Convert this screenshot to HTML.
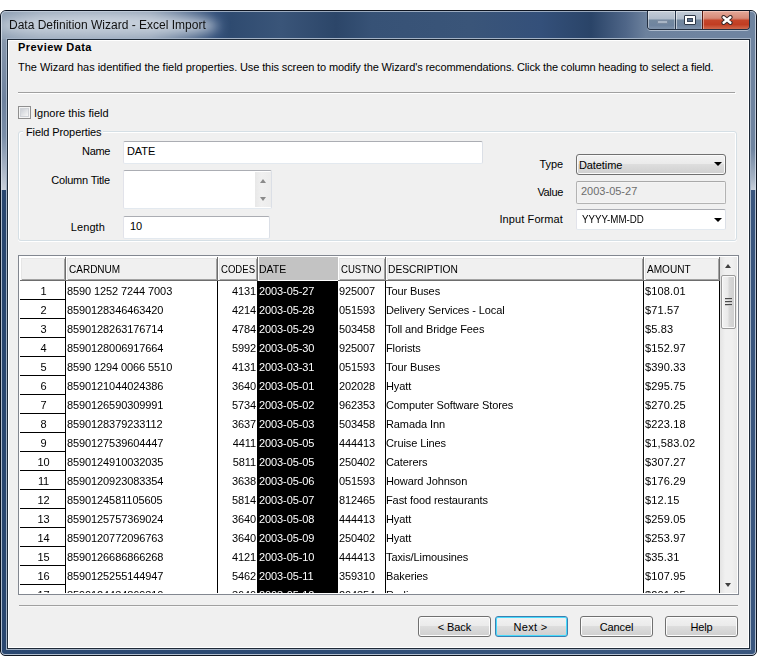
<!DOCTYPE html>
<html><head><meta charset="utf-8">
<style>
*{box-sizing:border-box;margin:0;padding:0}
html,body{width:757px;height:656px;overflow:hidden;background:#fff;font-family:"Liberation Sans",sans-serif;font-size:11px;color:#000}
.a{position:absolute}
.t{position:absolute;white-space:pre;line-height:13px;height:13px;letter-spacing:-0.1px}
.c{text-align:center}
.r{text-align:right}
#win{left:0;top:10px;width:757px;height:646px;border:1px solid #0d1420;border-radius:6px 6px 5px 5px;background:linear-gradient(90deg,#2a4770,#2c4a73 40%,#36547c 70%,#3a567e);overflow:hidden}
#frameTop{left:0;top:0;width:755px;height:179px;background:linear-gradient(#a9b5c4,#8797ac 30px,#6e829e 90px,#7a8ea8 125px,#a5b2c4 155px,#c6ced9 178px)}
#title{left:0;top:0;width:755px;height:28px;background:linear-gradient(90deg,#8fa0b4 0,#9aa9bb 40px,#8d9db2 150px,#33507a 215px,#2f4b70 230px,#3a5579 280px,#2c4669 335px,#375276 370px,#3a5579 470px,#34507a 540px,#2a4468 590px,#4f6688 625px,#6c819d 645px,#6f84a0 700px)}
#glow{left:-6px;top:3px;width:224px;height:24px;border-radius:50%;background:linear-gradient(rgba(222,228,236,.92),rgba(180,192,206,.9));filter:blur(6px)}
#inner{left:0;top:0;width:755px;height:644px;border:1px solid rgba(220,228,238,.75);border-top-color:rgba(200,210,222,.7);border-radius:5px 5px 4px 4px}
#client{left:5px;top:27px;width:745px;height:612px;border:1px solid #a4b3c6}
#client2{left:6px;top:28px;width:743px;height:610px;border:1px solid #1e2a38;background:#f0f0f0}
#client3{left:7px;top:29px;width:741px;height:608px;border:1px solid #fff;background:#f0f0f0}
.tb{position:absolute;background:#fff;border:1px solid #abadb3;border-left-color:#e2e3ea;border-right-color:#dbdfe6;border-bottom-color:#e3e9ef;border-radius:2px}
.tbx{position:absolute;border:1px solid #ccd3da;border-radius:2px}
.btn{position:absolute;width:73px;height:21px;border:1px solid #707070;border-radius:3px;background:linear-gradient(#f2f2f2 0,#ebebeb 45%,#dddddd 50%,#cfcfcf 100%);box-shadow:inset 0 0 0 1px #fcfcfc}
.hd{position:absolute;top:257px;height:24px;background:#f0f0f0;border-right:1px solid #6d6d6d;border-bottom:1px solid #6d6d6d;box-shadow:inset 1px 1px 0 #fff,inset 2px 2px 0 #e6e6e6,inset -1px -1px 0 #a3a3a3}
.vl{position:absolute;top:281px;width:1px;height:312px;background:#000}
</style></head><body>
<div id="win" class="a">
  <div id="frameTop" class="a"></div>
  <div id="title" class="a"></div>
  <div id="glow" class="a"></div>
  <div class="a" style="left:740px;top:28px;width:15px;height:151px;background:linear-gradient(#6f84a0,#6f84a0 110px,#a8b5c6 140px,#c6ced9 150px)"></div>
  <div id="inner" class="a"></div>
  <div class="t" style="left:8px;top:7px;font-size:12px;line-height:14px;height:14px;letter-spacing:0;color:#111;will-change:transform">Data Definition Wizard - Excel Import</div>
  <div id="client" class="a"></div>
  <div id="client2" class="a"></div>
  <div id="client3" class="a"></div>
</div>

<!-- title buttons -->
<div class="a" style="left:647px;top:11px;width:103px;height:19px;border:1px solid #222e40;border-top:none;border-radius:0 0 4px 4px;overflow:hidden;box-shadow:0 1px 0 rgba(230,236,244,.55)">
  <div class="a" style="left:0;top:0;width:28px;height:18px;background:linear-gradient(#c3ccd7,#b0bccb 42%,#73889f 52%,#6f849f 80%,#8194ac 100%);border-right:1px solid #28374c;box-shadow:inset 1px 1px 0 rgba(255,255,255,.45),inset -1px 0 0 rgba(255,255,255,.35)"></div>
  <div class="a" style="left:9px;top:9px;width:11px;height:4px;background:#a9b5c5;border:1px solid #7a8aa0"></div>
  <div class="a" style="left:28px;top:0;width:27px;height:18px;background:linear-gradient(#c3ccd7,#b0bccb 42%,#73889f 52%,#6f849f 80%,#8194ac 100%);border-right:1px solid #5a1a10;box-shadow:inset 1px 1px 0 rgba(255,255,255,.55),inset -1px 0 0 rgba(255,255,255,.35)"></div>
  <div class="a" style="left:36px;top:4px;width:12px;height:10px;border:1px solid #2e3848;background:#fff;border-radius:1px"></div>
  <div class="a" style="left:39px;top:7px;width:6px;height:4px;background:#5d718d;border:1px solid #3a4658"></div>
  <div class="a" style="left:55px;top:0;width:48px;height:18px;background:linear-gradient(#e4a999,#d68a78 40%,#c5452a 52%,#c13d22 75%,#cf6a4e 100%);box-shadow:inset 1px 1px 0 rgba(255,220,210,.5)"></div>
  <svg class="a" style="left:73px;top:4px" width="12" height="10" viewBox="0 0 12 10"><path d="M2.6 2.2 L9.4 7.8 M9.4 2.2 L2.6 7.8" stroke="#3a2a2a" stroke-width="4.4" stroke-linecap="round"/><path d="M2.6 2.2 L9.4 7.8 M9.4 2.2 L2.6 7.8" stroke="#fff" stroke-width="2.4" stroke-linecap="round"/></svg>
</div>

<!-- heading -->
<div class="t" style="left:18px;top:41px;font-weight:bold;letter-spacing:0.45px">Preview Data</div>
<div class="t" style="left:18px;top:61px;letter-spacing:-0.03px">The Wizard has identified the field properties.</div>
<div class="t" style="left:240px;top:61px;letter-spacing:-0.11px">Use this screen to modify the Wizard's recommendations.</div>
<div class="t" style="left:517px;top:61px;letter-spacing:-0.14px">Click the column heading to select a field.</div>
<div class="a" style="left:18px;top:92px;width:717px;height:1px;background:#a0a0a0"></div>
<div class="a" style="left:18px;top:93px;width:718px;height:1px;background:#fff"></div>

<!-- checkbox -->
<div class="a" style="left:18px;top:106px;width:13px;height:13px;border:1px solid #8f8f8f;background:#f4f4f4"></div>
<div class="a" style="left:20px;top:108px;width:9px;height:9px;border:1px solid #d0d3d8;background:linear-gradient(135deg,#cbcfd5,#f6f6f6)"></div>
<div class="t" style="left:34px;top:107px;letter-spacing:0">Ignore this field</div>

<!-- group -->
<div class="a" style="left:18px;top:131px;width:719px;height:110px;border:1px solid #d5dfe5;border-radius:3px;box-shadow:inset 1px 1px 0 #fff,inset -1px 0 0 #fff,0 1px 0 #fff"></div>
<div class="a" style="left:23px;top:125px;width:80px;height:12px;background:#f0f0f0"></div>
<div class="t" style="left:26px;top:126px;letter-spacing:-0.1px">Field Properties</div>

<div class="t r" style="left:60px;width:50px;top:145px;letter-spacing:-0.35px">Name</div>
<div class="tb" style="left:123px;top:141px;width:360px;height:23px"></div>
<div class="t" style="left:127px;top:145px">DATE</div>

<div class="t r" style="left:40px;width:70px;top:174px;letter-spacing:-0.2px">Column Title</div>
<div class="tb" style="left:123px;top:170px;width:149px;height:39px"></div>
<div class="a" style="left:255px;top:172px;width:16px;height:35px;background:linear-gradient(90deg,#e8e8e8,#f0f0f0 40%,#ececec)"></div>
<div class="a" style="left:260px;top:179px;width:0;height:0;border-left:3.5px solid transparent;border-right:3.5px solid transparent;border-bottom:4px solid #8a8a8a"></div>
<div class="a" style="left:260px;top:197px;width:0;height:0;border-left:3.5px solid transparent;border-right:3.5px solid transparent;border-top:4px solid #8a8a8a"></div>

<div class="t r" style="left:40px;width:65px;top:221px;letter-spacing:0.1px">Length</div>
<div class="tb" style="left:123px;top:216px;width:147px;height:23px"></div>
<div class="t" style="left:130px;top:220px">10</div>

<div class="t r" style="left:500px;width:63px;top:158px">Type</div>
<div class="a" style="left:576px;top:154px;width:150px;height:21px;border:1px solid #707070;border-radius:3px;background:linear-gradient(#f2f2f2 0,#ebebeb 45%,#dddddd 50%,#cfcfcf 100%);box-shadow:inset 0 0 0 1px #fafafa"></div>
<div class="t" style="left:579px;top:159px">Datetime</div>
<div class="a" style="left:714px;top:162px;width:0;height:0;border-left:4px solid transparent;border-right:4px solid transparent;border-top:4px solid #000"></div>

<div class="t r" style="left:500px;width:63px;top:186px;letter-spacing:-0.35px">Value</div>
<div class="a" style="left:576px;top:181px;width:150px;height:23px;border:1px solid #b3b3b3;border-top-color:#a9a9a9;border-radius:2px;background:#f0f0f0;box-shadow:inset 0 0 0 1px #f4f4f4"></div>
<div class="t" style="left:581px;top:185px;color:#6d6d6d;letter-spacing:0">2003-05-27</div>

<div class="t r" style="left:480px;width:83px;top:213px;letter-spacing:0.1px">Input Format</div>
<div class="tb" style="left:576px;top:209px;width:150px;height:21px"></div>
<div class="t" style="left:582px;top:213px;letter-spacing:0;transform:scaleX(0.885);transform-origin:0 0">YYYY-MM-DD</div>
<div class="a" style="left:714px;top:218px;width:0;height:0;border-left:4px solid transparent;border-right:4px solid transparent;border-top:4px solid #000"></div>

<!-- grid -->
<div class="a" style="left:18px;top:255px;width:721px;height:340px;border:1px solid #828790;background:#fff"></div>
<div class="hd" style="left:20px;width:46px"></div>
<div class="hd" style="left:66px;width:152px"></div>
<div class="hd" style="left:218px;width:40px"></div>
<div class="a" style="left:258px;top:257px;width:80px;height:24px;background:#c3c3c3;border-left:1px solid #fff;border-bottom:1px solid #fff"></div>
<div class="hd" style="left:338px;width:48px"></div>
<div class="hd" style="left:386px;width:258px"></div>
<div class="hd" style="left:644px;width:76px"></div>
<div class="t" style="left:69px;top:263px;letter-spacing:0;transform:scaleX(0.91);transform-origin:0 0">CARDNUM</div>
<div class="t" style="left:221px;top:263px;letter-spacing:0;transform:scaleX(0.87);transform-origin:0 0">CODES</div>
<div class="t" style="left:259px;top:263px;letter-spacing:0;transform:scaleX(0.955);transform-origin:0 0">DATE</div>
<div class="t" style="left:341px;top:263px;letter-spacing:0;transform:scaleX(0.87);transform-origin:0 0">CUSTNO</div>
<div class="t" style="left:388px;top:263px;letter-spacing:0;transform:scaleX(0.93);transform-origin:0 0">DESCRIPTION</div>
<div class="t" style="left:647px;top:263px;letter-spacing:0;transform:scaleX(0.915);transform-origin:0 0">AMOUNT</div>
<div class="a" style="left:257px;top:281px;width:81px;height:312px;background:#000"></div>
<div class="vl" style="left:65px"></div>
<div class="vl" style="left:217px"></div>
<div class="vl" style="left:385px"></div>
<div class="vl" style="left:643px"></div>
<div class="vl" style="left:719px"></div>
<div class="a" style="left:0;top:0;width:757px;height:593px;overflow:hidden">
<div class="t c" style="left:21px;top:285px;width:45px">1</div>
<div class="a" style="left:20px;top:299px;width:45px;height:1px;background:#000"></div>
<div class="t" style="left:67px;top:285px">8590 1252 7244 7003</div>
<div class="t r" style="left:219px;width:37px;top:285px">4131</div>
<div class="t" style="left:259px;top:285px;color:#fff">2003-05-27</div>
<div class="t" style="left:339px;top:285px">925007</div>
<div class="t" style="left:386px;top:285px">Tour Buses</div>
<div class="t" style="left:645px;top:285px;letter-spacing:0.15px">$108.01</div>
<div class="t c" style="left:21px;top:304px;width:45px">2</div>
<div class="a" style="left:20px;top:318px;width:45px;height:1px;background:#000"></div>
<div class="t" style="left:67px;top:304px">8590128346463420</div>
<div class="t r" style="left:219px;width:37px;top:304px">4214</div>
<div class="t" style="left:259px;top:304px;color:#fff">2003-05-28</div>
<div class="t" style="left:339px;top:304px">051593</div>
<div class="t" style="left:386px;top:304px">Delivery Services - Local</div>
<div class="t" style="left:645px;top:304px;letter-spacing:0.15px">$71.57</div>
<div class="t c" style="left:21px;top:323px;width:45px">3</div>
<div class="a" style="left:20px;top:337px;width:45px;height:1px;background:#000"></div>
<div class="t" style="left:67px;top:323px">8590128263176714</div>
<div class="t r" style="left:219px;width:37px;top:323px">4784</div>
<div class="t" style="left:259px;top:323px;color:#fff">2003-05-29</div>
<div class="t" style="left:339px;top:323px">503458</div>
<div class="t" style="left:386px;top:323px">Toll and Bridge Fees</div>
<div class="t" style="left:645px;top:323px;letter-spacing:0.15px">$5.83</div>
<div class="t c" style="left:21px;top:342px;width:45px">4</div>
<div class="a" style="left:20px;top:356px;width:45px;height:1px;background:#000"></div>
<div class="t" style="left:67px;top:342px">8590128006917664</div>
<div class="t r" style="left:219px;width:37px;top:342px">5992</div>
<div class="t" style="left:259px;top:342px;color:#fff">2003-05-30</div>
<div class="t" style="left:339px;top:342px">925007</div>
<div class="t" style="left:386px;top:342px">Florists</div>
<div class="t" style="left:645px;top:342px;letter-spacing:0.15px">$152.97</div>
<div class="t c" style="left:21px;top:361px;width:45px">5</div>
<div class="a" style="left:20px;top:375px;width:45px;height:1px;background:#000"></div>
<div class="t" style="left:67px;top:361px">8590 1294 0066 5510</div>
<div class="t r" style="left:219px;width:37px;top:361px">4131</div>
<div class="t" style="left:259px;top:361px;color:#fff">2003-03-31</div>
<div class="t" style="left:339px;top:361px">051593</div>
<div class="t" style="left:386px;top:361px">Tour Buses</div>
<div class="t" style="left:645px;top:361px;letter-spacing:0.15px">$390.33</div>
<div class="t c" style="left:21px;top:380px;width:45px">6</div>
<div class="a" style="left:20px;top:394px;width:45px;height:1px;background:#000"></div>
<div class="t" style="left:67px;top:380px">8590121044024386</div>
<div class="t r" style="left:219px;width:37px;top:380px">3640</div>
<div class="t" style="left:259px;top:380px;color:#fff">2003-05-01</div>
<div class="t" style="left:339px;top:380px">202028</div>
<div class="t" style="left:386px;top:380px">Hyatt</div>
<div class="t" style="left:645px;top:380px;letter-spacing:0.15px">$295.75</div>
<div class="t c" style="left:21px;top:399px;width:45px">7</div>
<div class="a" style="left:20px;top:413px;width:45px;height:1px;background:#000"></div>
<div class="t" style="left:67px;top:399px">8590126590309991</div>
<div class="t r" style="left:219px;width:37px;top:399px">5734</div>
<div class="t" style="left:259px;top:399px;color:#fff">2003-05-02</div>
<div class="t" style="left:339px;top:399px">962353</div>
<div class="t" style="left:386px;top:399px">Computer Software Stores</div>
<div class="t" style="left:645px;top:399px;letter-spacing:0.15px">$270.25</div>
<div class="t c" style="left:21px;top:418px;width:45px">8</div>
<div class="a" style="left:20px;top:432px;width:45px;height:1px;background:#000"></div>
<div class="t" style="left:67px;top:418px">8590128379233112</div>
<div class="t r" style="left:219px;width:37px;top:418px">3637</div>
<div class="t" style="left:259px;top:418px;color:#fff">2003-05-03</div>
<div class="t" style="left:339px;top:418px">503458</div>
<div class="t" style="left:386px;top:418px">Ramada Inn</div>
<div class="t" style="left:645px;top:418px;letter-spacing:0.15px">$223.18</div>
<div class="t c" style="left:21px;top:437px;width:45px">9</div>
<div class="a" style="left:20px;top:451px;width:45px;height:1px;background:#000"></div>
<div class="t" style="left:67px;top:437px">8590127539604447</div>
<div class="t r" style="left:219px;width:37px;top:437px">4411</div>
<div class="t" style="left:259px;top:437px;color:#fff">2003-05-05</div>
<div class="t" style="left:339px;top:437px">444413</div>
<div class="t" style="left:386px;top:437px">Cruise Lines</div>
<div class="t" style="left:645px;top:437px;letter-spacing:0.15px">$1,583.02</div>
<div class="t c" style="left:21px;top:456px;width:45px">10</div>
<div class="a" style="left:20px;top:470px;width:45px;height:1px;background:#000"></div>
<div class="t" style="left:67px;top:456px">8590124910032035</div>
<div class="t r" style="left:219px;width:37px;top:456px">5811</div>
<div class="t" style="left:259px;top:456px;color:#fff">2003-05-05</div>
<div class="t" style="left:339px;top:456px">250402</div>
<div class="t" style="left:386px;top:456px">Caterers</div>
<div class="t" style="left:645px;top:456px;letter-spacing:0.15px">$307.27</div>
<div class="t c" style="left:21px;top:475px;width:45px">11</div>
<div class="a" style="left:20px;top:489px;width:45px;height:1px;background:#000"></div>
<div class="t" style="left:67px;top:475px">8590120923083354</div>
<div class="t r" style="left:219px;width:37px;top:475px">3638</div>
<div class="t" style="left:259px;top:475px;color:#fff">2003-05-06</div>
<div class="t" style="left:339px;top:475px">051593</div>
<div class="t" style="left:386px;top:475px">Howard Johnson</div>
<div class="t" style="left:645px;top:475px;letter-spacing:0.15px">$176.29</div>
<div class="t c" style="left:21px;top:494px;width:45px">12</div>
<div class="a" style="left:20px;top:508px;width:45px;height:1px;background:#000"></div>
<div class="t" style="left:67px;top:494px">8590124581105605</div>
<div class="t r" style="left:219px;width:37px;top:494px">5814</div>
<div class="t" style="left:259px;top:494px;color:#fff">2003-05-07</div>
<div class="t" style="left:339px;top:494px">812465</div>
<div class="t" style="left:386px;top:494px">Fast food restaurants</div>
<div class="t" style="left:645px;top:494px;letter-spacing:0.15px">$12.15</div>
<div class="t c" style="left:21px;top:513px;width:45px">13</div>
<div class="a" style="left:20px;top:527px;width:45px;height:1px;background:#000"></div>
<div class="t" style="left:67px;top:513px">8590125757369024</div>
<div class="t r" style="left:219px;width:37px;top:513px">3640</div>
<div class="t" style="left:259px;top:513px;color:#fff">2003-05-08</div>
<div class="t" style="left:339px;top:513px">444413</div>
<div class="t" style="left:386px;top:513px">Hyatt</div>
<div class="t" style="left:645px;top:513px;letter-spacing:0.15px">$259.05</div>
<div class="t c" style="left:21px;top:532px;width:45px">14</div>
<div class="a" style="left:20px;top:546px;width:45px;height:1px;background:#000"></div>
<div class="t" style="left:67px;top:532px">8590120772096763</div>
<div class="t r" style="left:219px;width:37px;top:532px">3640</div>
<div class="t" style="left:259px;top:532px;color:#fff">2003-05-09</div>
<div class="t" style="left:339px;top:532px">250402</div>
<div class="t" style="left:386px;top:532px">Hyatt</div>
<div class="t" style="left:645px;top:532px;letter-spacing:0.15px">$253.97</div>
<div class="t c" style="left:21px;top:551px;width:45px">15</div>
<div class="a" style="left:20px;top:565px;width:45px;height:1px;background:#000"></div>
<div class="t" style="left:67px;top:551px">8590126686866268</div>
<div class="t r" style="left:219px;width:37px;top:551px">4121</div>
<div class="t" style="left:259px;top:551px;color:#fff">2003-05-10</div>
<div class="t" style="left:339px;top:551px">444413</div>
<div class="t" style="left:386px;top:551px">Taxis/Limousines</div>
<div class="t" style="left:645px;top:551px;letter-spacing:0.15px">$35.31</div>
<div class="t c" style="left:21px;top:570px;width:45px">16</div>
<div class="a" style="left:20px;top:584px;width:45px;height:1px;background:#000"></div>
<div class="t" style="left:67px;top:570px">8590125255144947</div>
<div class="t r" style="left:219px;width:37px;top:570px">5462</div>
<div class="t" style="left:259px;top:570px;color:#fff">2003-05-11</div>
<div class="t" style="left:339px;top:570px">359310</div>
<div class="t" style="left:386px;top:570px">Bakeries</div>
<div class="t" style="left:645px;top:570px;letter-spacing:0.15px">$107.95</div>
<div class="t c" style="left:21px;top:589px;width:45px">17</div>
<div class="a" style="left:20px;top:603px;width:45px;height:1px;background:#000"></div>
<div class="t" style="left:67px;top:589px">8590124434869310</div>
<div class="t r" style="left:219px;width:37px;top:589px">3640</div>
<div class="t" style="left:259px;top:589px;color:#fff">2003-05-12</div>
<div class="t" style="left:339px;top:589px">204354</div>
<div class="t" style="left:386px;top:589px">Radio</div>
<div class="t" style="left:645px;top:589px;letter-spacing:0.15px">$201.05</div>
</div>
<!-- scrollbar -->
<div class="a" style="left:720px;top:257px;width:17px;height:336px;background:linear-gradient(90deg,#e3e3e3,#f0f0f0 30%,#f0f0f0 70%,#e8e8e8)"></div>
<div class="a" style="left:725px;top:264px;width:0;height:0;border-left:3.5px solid transparent;border-right:3.5px solid transparent;border-bottom:4px solid #404040"></div>
<div class="a" style="left:721px;top:275px;width:15px;height:54px;border:1px solid #9a9a9a;border-radius:2px;background:linear-gradient(90deg,#f3f3f3,#e9e9e9 45%,#d8d8d8 55%,#cecece);box-shadow:inset 0 0 0 1px #fafafa"></div>
<div class="a" style="left:725px;top:298px;width:7px;height:1px;background:#4a4a4a;box-shadow:0 1px 0 #c8c8c8,0 3px 0 #4a4a4a,0 4px 0 #c8c8c8,0 6px 0 #4a4a4a,0 7px 0 #c8c8c8"></div>
<div class="a" style="left:725px;top:583px;width:0;height:0;border-left:3.5px solid transparent;border-right:3.5px solid transparent;border-top:4px solid #404040"></div>

<!-- bottom -->
<div class="a" style="left:19px;top:605px;width:719px;height:1px;background:#a0a0a0"></div>
<div class="a" style="left:19px;top:606px;width:719px;height:1px;background:#f8f8f8"></div>
<div class="btn" style="left:418px;top:616px"></div>
<div class="btn" style="left:495px;top:616px;border-color:#3c7fb1;box-shadow:inset 0 0 0 1px #48dbfc"></div>
<div class="btn" style="left:580px;top:616px"></div>
<div class="btn" style="left:665px;top:616px"></div>
<div class="t c" style="left:418px;width:73px;top:621px">&lt; Back</div>
<div class="t c" style="left:494px;width:73px;top:621px;letter-spacing:0.35px">Next &gt;</div>
<div class="t c" style="left:580px;width:73px;top:621px">Cancel</div>
<div class="t c" style="left:665px;width:73px;top:621px">Help</div>
</body></html>
